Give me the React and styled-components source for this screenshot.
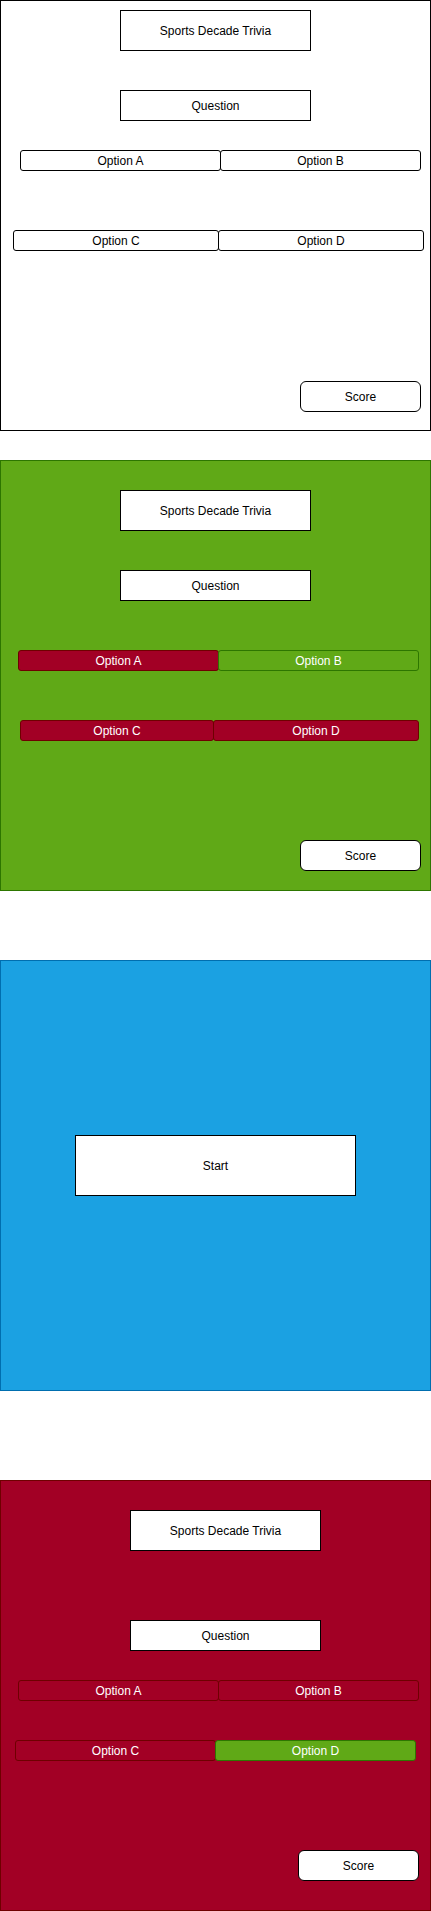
import React from "react";
import styled, { createGlobalStyle } from "styled-components";

const GlobalStyle = createGlobalStyle`
  html, body {
    margin: 0;
    padding: 0;
    background: #fff;
  }
  body {
    font-family: "Liberation Sans", Helvetica, Arial, sans-serif;
    font-size: 12px;
    color: #000;
  }
  * {
    box-sizing: border-box;
  }
`;

const GREEN = "#60a917";
const GREEN_LINE = "#2d7600";
const RED = "#a20025";
const RED_LINE = "#6f0000";
const BLUE = "#1ba1e2";
const BLUE_LINE = "#006eaf";

const Page = styled.main`
  width: 431px;
  display: flex;
  flex-direction: column;
`;

const Frame = styled.section`
  width: 431px;
  height: 431px;
  margin-top: ${(p) => p.$gap}px;
  background: ${(p) => p.$fill};
  border: 1px solid ${(p) => p.$line};
  display: flex;
  flex-direction: column;
  align-items: flex-start;
`;

const Label = styled.div`
  width: 191px;
  height: ${(p) => p.$h}px;
  margin: ${(p) => p.$top}px 0 0 ${(p) => p.$left}px;
  background: #fff;
  border: 1px solid #000;
  display: flex;
  align-items: center;
  justify-content: center;
  flex-shrink: 0;
`;

const StartButton = styled.button`
  width: 281px;
  height: 61px;
  margin: ${(p) => p.$top}px 0 0 ${(p) => p.$left}px;
  background: #fff;
  border: 1px solid #000;
  font: inherit;
  color: #000;
  padding: 0;
  cursor: pointer;
`;

const OptionRow = styled.div`
  display: flex;
  margin: ${(p) => p.$top}px 0 0 ${(p) => p.$left}px;
`;

const Option = styled.button`
  width: ${(p) => p.$w}px;
  height: 21px;
  padding: 0;
  font: inherit;
  border-radius: 3px;
  background: ${(p) => p.$fill};
  border: 1px solid ${(p) => p.$line};
  color: ${(p) => p.$ink};
  display: flex;
  align-items: center;
  justify-content: center;
  position: relative;
  & + & {
    margin-left: -1px;
  }
`;

const ScoreBox = styled.div`
  width: 121px;
  height: 31px;
  margin: ${(p) => p.$top}px 0 0 ${(p) => p.$left}px;
  background: #fff;
  border: 1px solid #000;
  border-radius: 6px;
  display: flex;
  align-items: center;
  justify-content: center;
`;

const plain = { fill: "#fff", line: "#000", ink: "#000" };
const wrong = { fill: RED, line: RED_LINE, ink: "#fff" };
const right = { fill: GREEN, line: GREEN_LINE, ink: "#fff" };

const quizScreens = [
  {
    gap: 0,
    fill: "#fff",
    line: "#000",
    titleTop: 9,
    titleLeft: 119,
    questionTop: 39,
    rows: [
      { top: 29, left: 19, opts: [["Option A", 201, plain], ["Option B", 201, plain]] },
      { top: 59, left: 12, opts: [["Option C", 206, plain], ["Option D", 206, plain]] },
    ],
    scoreTop: 130,
    scoreLeft: 299,
  },
  {
    gap: 29,
    fill: GREEN,
    line: GREEN_LINE,
    titleTop: 29,
    titleLeft: 119,
    questionTop: 39,
    rows: [
      { top: 49, left: 17, opts: [["Option A", 201, wrong], ["Option B", 201, right]] },
      { top: 49, left: 19, opts: [["Option C", 194, wrong], ["Option D", 206, wrong]] },
    ],
    scoreTop: 99,
    scoreLeft: 299,
  },
];

const lastScreen = {
  gap: 89,
  fill: RED,
  line: RED_LINE,
  titleTop: 29,
  titleLeft: 129,
  questionTop: 69,
  rows: [
    { top: 29, left: 17, opts: [["Option A", 201, wrong], ["Option B", 201, wrong]] },
    { top: 39, left: 14, opts: [["Option C", 201, wrong], ["Option D", 201, right]] },
  ],
  scoreTop: 89,
  scoreLeft: 297,
};

const QuizScreen = ({ screen }) => (
  <Frame $gap={screen.gap} $fill={screen.fill} $line={screen.line}>
    <Label $h={41} $top={screen.titleTop} $left={screen.titleLeft}>
      Sports Decade Trivia
    </Label>
    <Label $h={31} $top={screen.questionTop} $left={screen.titleLeft}>
      Question
    </Label>
    {screen.rows.map((row, i) => (
      <OptionRow key={i} $top={row.top} $left={row.left}>
        {row.opts.map(([text, w, look]) => (
          <Option key={text} $w={w} $fill={look.fill} $line={look.line} $ink={look.ink}>
            {text}
          </Option>
        ))}
      </OptionRow>
    ))}
    <ScoreBox $top={screen.scoreTop} $left={screen.scoreLeft}>
      Score
    </ScoreBox>
  </Frame>
);

export default function App() {
  return (
    <Page>
      <GlobalStyle />
      {quizScreens.map((s, i) => (
        <QuizScreen key={i} screen={s} />
      ))}
      <Frame $gap={69} $fill={BLUE} $line={BLUE_LINE}>
        <StartButton $top={174} $left={74}>
          Start
        </StartButton>
      </Frame>
      <QuizScreen screen={lastScreen} />
    </Page>
  );
}
